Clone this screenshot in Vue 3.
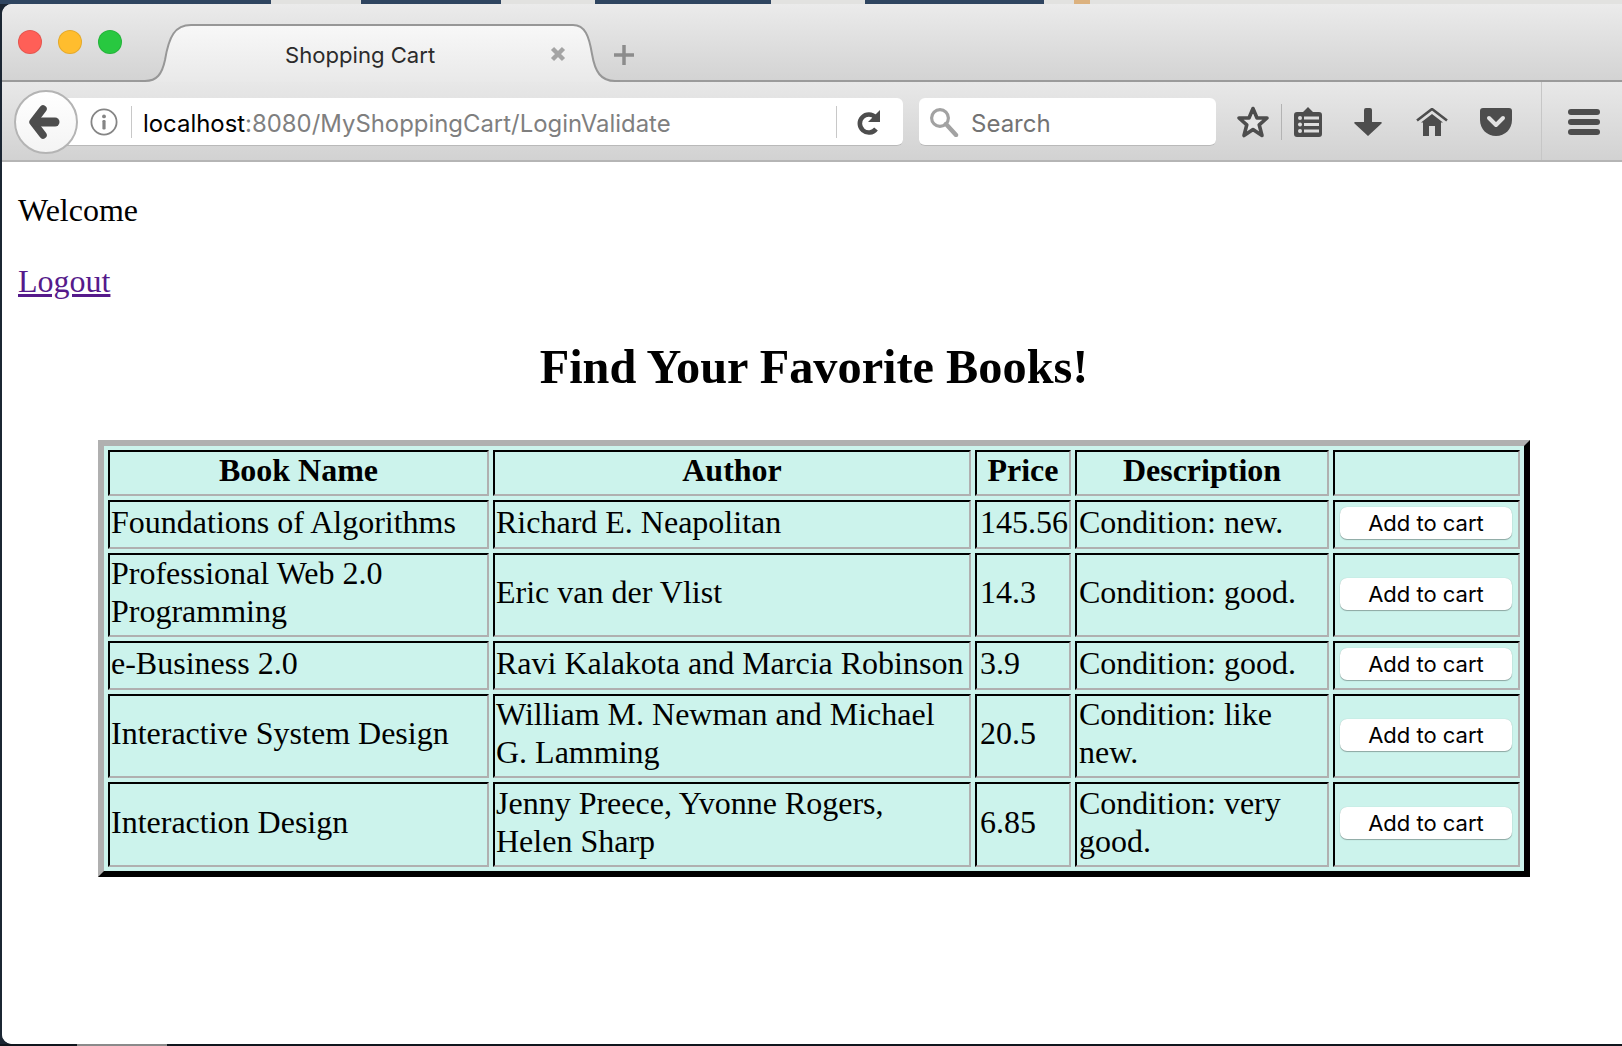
<script setup>
const headers = ['Book Name', 'Author', 'Price', 'Description', '']
const books = [
  { name: 'Foundations of Algorithms', author: 'Richard E. Neapolitan', price: '145.56', cond: 'Condition: new.' },
  { name: 'Professional Web 2.0 Programming', author: 'Eric van der Vlist', price: '14.3', cond: 'Condition: good.' },
  { name: 'e-Business 2.0', author: 'Ravi Kalakota and Marcia Robinson', price: '3.9', cond: 'Condition: good.' },
  { name: 'Interactive System Design', author: 'William M. Newman and Michael G. Lamming', price: '20.5', cond: 'Condition: like new.' },
  { name: 'Interaction Design', author: 'Jenny Preece, Yvonne Rogers, Helen Sharp', price: '6.85', cond: 'Condition: very good.' },
]
</script>

<template>
  <div class="screen">
    <div class="strip-top">
      <i class="d w271"></i><i class="l w90"></i><i class="d w140"></i><i class="l w94"></i><i class="d w176"></i><i class="l w94"></i><i class="d w179"></i><i class="l w30"></i><i class="tan"></i><i class="l grow"></i>
    </div>
    <div class="window">
      <div class="tabbar">
        <div class="lights">
          <span class="light red"></span><span class="light yellow"></span><span class="light green"></span>
        </div>
        <div class="tab">
          <svg class="tab-shape" width="480" height="58" viewBox="0 0 480 58">
            <defs>
              <linearGradient id="tabfill" x1="0" y1="0" x2="0" y2="1">
                <stop offset="0" stop-color="#f8f8f8" />
                <stop offset="1" stop-color="#e9e9e9" />
              </linearGradient>
            </defs>
            <path d="M0 58V57H5C17 57 22 50 25 36C29 12 35 1 51 1H433C445 1 449 12 452 30C455 48 461 57 475 57H480V58Z" fill="url(#tabfill)" />
            <path d="M0 57H5C17 57 22 50 25 36C29 12 35 1 51 1H433C445 1 449 12 452 30C455 48 461 57 475 57H480" fill="none" stroke="#979797" stroke-width="2" />
          </svg>
          <span class="tab-title">Shopping Cart</span>
          <svg class="tab-close" width="16" height="16" viewBox="0 0 16 16"><path d="M2.5 2.5L13.5 13.5M13.5 2.5L2.5 13.5" stroke="#a4a4a4" stroke-width="4.4" /></svg>
        </div>
        <svg class="new-tab" width="22" height="22" viewBox="0 0 22 22"><path d="M11 1V21M1 11H21" stroke="#8c8c8c" stroke-width="3.5" /></svg>
      </div>

      <div class="toolbar">
        <div class="back">
          <svg width="32" height="34" viewBox="0 0 32 34"><path d="M15 4L5 17L15 30" fill="none" stroke="#4d4d4d" stroke-width="7.5" stroke-linejoin="round" stroke-linecap="round" /><path d="M7 17H27" stroke="#4d4d4d" stroke-width="9" stroke-linecap="round" /></svg>
        </div>
        <div class="urlbar">
          <svg class="info" width="28" height="28" viewBox="0 0 28 28"><circle cx="14" cy="14" r="12.6" fill="none" stroke="#858585" stroke-width="1.8" /><circle cx="14" cy="8.4" r="1.9" fill="#858585" /><rect x="12.4" y="12" width="3.2" height="9.5" rx="1.2" fill="#858585" /></svg>
          <span class="vsep first"></span>
          <div class="url"><span class="host">localhost</span>:8080/MyShoppingCart/LoginValidate</div>
          <span class="vsep"></span>
          <svg class="reload" width="26" height="28" viewBox="0 0 26 28"><path d="M19.5 9.5A9 9 0 1 0 20 21" fill="none" stroke="#4d4d4d" stroke-width="4.6" /><path d="M24 2V14H12Z" fill="#4d4d4d" /></svg>
        </div>
        <div class="search">
          <svg class="glass" width="30" height="30" viewBox="0 0 30 30"><circle cx="11" cy="11" r="8.4" fill="none" stroke="#a2a2a2" stroke-width="3.2" /><path d="M17 17L27 28" stroke="#a2a2a2" stroke-width="4.4" stroke-linecap="round" /></svg>
          <span class="search-label">Search</span>
        </div>
        <div class="tools">
          <svg class="star" width="34" height="34" viewBox="0 0 34 34"><path d="M17 3.5L21 13H31L23.2 19.8L26 30.5L17 24.5L8 30.5L10.8 19.8L3 13H13Z" fill="#e4e4e4" stroke="#4d4d4d" stroke-width="3.6" stroke-linejoin="round" /></svg>
          <span class="tool-sep"></span>
          <svg class="clip" width="28" height="30" viewBox="0 0 28 30"><path d="M3 5H9L14 0L19 5H25A3 3 0 0 1 28 8V27A3 3 0 0 1 25 30H3A3 3 0 0 1 0 27V8A3 3 0 0 1 3 5Z" fill="#4d4d4d" /><g fill="#dedede"><circle cx="6" cy="11" r="2" /><circle cx="6" cy="17.5" r="2" /><circle cx="6" cy="24" r="2" /><rect x="10" y="9.5" width="15" height="3" /><rect x="10" y="16" width="15" height="3" /><rect x="10" y="22.5" width="15" height="3" /></g></svg>
          <svg class="down" width="28" height="28" viewBox="0 0 28 28"><path d="M10 2A2 2 0 0 1 12 0H16A2 2 0 0 1 18 2V14H27A1 1 0 0 1 27.5 15.5L14 28L.5 15.5A1 1 0 0 1 1 14H10Z" fill="#4d4d4d" /></svg>
          <svg class="home" width="32" height="28" viewBox="0 0 32 28"><path d="M1 12.5L16 1L31 12.5" fill="none" stroke="#4d4d4d" stroke-width="2.6" /><path d="M16 6L27 14.5H25V28H19V18H13V28H7V14.5H5Z" fill="#4d4d4d" /></svg>
          <svg class="pocket" width="32" height="28" viewBox="0 0 32 28"><path d="M3 0H29A3 3 0 0 1 32 3V12C32 21 25 28 16 28C7 28 0 21 0 12V3A3 3 0 0 1 3 0Z" fill="#4d4d4d" /><path d="M9 10L16 17L23 10" fill="none" stroke="#e2e2e2" stroke-width="4" stroke-linecap="round" stroke-linejoin="round" /></svg>
          <span class="tool-sep tall"></span>
          <div class="burger"><i></i><i></i><i></i></div>
        </div>
      </div>

      <div class="page">
        <p class="text">Welcome</p>
        <p class="text"><a class="logout" href="#">Logout</a></p>
        <h1 class="title">Find Your Favorite Books!</h1>
        <table class="books">
          <colgroup>
            <col class="c1" /><col class="c2" /><col class="c3" /><col class="c4" /><col class="c5" />
          </colgroup>
          <thead>
            <tr>
              <th v-for="(h, i) in headers" :key="i"><span class="cell-text">{{ h }}</span></th>
            </tr>
          </thead>
          <tbody>
            <tr v-for="b in books" :key="b.name">
              <td class="tight"><span class="cell-text">{{ b.name }}</span></td>
              <td class="tight"><span class="cell-text">{{ b.author }}</span></td>
              <td class="wide"><span class="cell-text">{{ b.price }}</span></td>
              <td><span class="cell-text">{{ b.cond }}</span></td>
              <td class="action"><button class="add" type="button">Add to cart</button></td>
            </tr>
          </tbody>
        </table>
      </div>
    </div>
    <div class="strip-bottom"><i class="g"></i></div>
  </div>
</template>

<style>
html, body { margin: 0; padding: 0; background: #141c26; overflow: hidden; }
</style>

<style scoped>
.screen {
  width: 1622px;
  height: 1046px;
  display: flex;
  flex-direction: column;
  background: #1b2633;
  overflow: hidden;
}
.strip-top { height: 4px; display: flex; flex: none; }
.strip-top i { display: block; height: 4px; }
.d { background: #2f4560; }
.l { background: #e2e2e0; }
.tan { width: 16px; background: #dcb27f; }
.w271 { width: 271px; }
.w90 { width: 90px; }
.w140 { width: 140px; }
.w94 { width: 94px; }
.w176 { width: 176px; }
.w179 { width: 179px; }
.w30 { width: 30px; }
.grow { flex: 1; }
.strip-bottom { height: 2px; flex: none; padding-left: 77px; background: #10161d; }
.strip-bottom .g { display: block; width: 90px; height: 2px; background: #8a8a8a; }
.window {
  flex: 1;
  min-height: 0;
  margin-left: 2px;
  display: flex;
  flex-direction: column;
  border-radius: 10px 0 0 10px;
  overflow: hidden;
  background: #fff;
}
.tabbar {
  height: 78px;
  flex: none;
  box-sizing: border-box;
  display: flex;
  align-items: flex-end;
  background: linear-gradient(#ebebeb, #d3d3d3);
  border-bottom: 2px solid #9b9b9b;
}
.lights {
  width: 138px;
  height: 76px;
  flex: none;
  box-sizing: border-box;
  padding: 26px 0 0 16px;
  display: flex;
  gap: 16px;
}
.light { width: 24px; height: 24px; border-radius: 50%; box-sizing: border-box; border: 1px solid rgba(0, 0, 0, .1); }
.red { background: #ff5f57; }
.yellow { background: #ffbd2e; }
.green { background: #28c840; }
.tab {
  position: relative;
  width: 478px;
  height: 56px;
  flex: none;
  display: flex;
  align-items: center;
}
.tab-shape { position: absolute; left: 0; top: 0; }
.tab-title {
  position: relative;
  margin: 6px 0 0 145px;
  font: 22.1px/30px Inter, "Liberation Sans", sans-serif;
  color: #2b2b2b;
  white-space: nowrap;
}
.tab-close { position: absolute; left: 410px; top: 22px; }
.new-tab { margin: 0 0 14px -5px; flex: none; }
.toolbar {
  height: 80px;
  flex: none;
  box-sizing: border-box;
  display: flex;
  align-items: center;
  background: linear-gradient(#e8e8e8, #d2d2d2);
  border-bottom: 2px solid #b5b5b5;
}
.back {
  width: 64px;
  height: 64px;
  flex: none;
  box-sizing: border-box;
  margin: 2px 0 0 12px;
  border: 2px solid #b4b4b4;
  border-radius: 50%;
  background: linear-gradient(#fff, #f4f4f4);
  display: flex;
  align-items: center;
  justify-content: center;
  position: relative;
  z-index: 1;
}
.back svg { margin-left: -4px; }
.urlbar {
  width: 843px;
  height: 48px;
  flex: none;
  margin: 2px 0 0 -18px;
  box-sizing: border-box;
  padding: 0 21px 0 30px;
  display: flex;
  align-items: center;
  background: #fff;
  border-radius: 0 6px 6px 0;
  border-bottom: 1px solid #b9b9b9;
}
.info { flex: none; }
.vsep { width: 1px; height: 32px; background: #c8c8c8; flex: none; }
.vsep.first { margin-left: 13px; }
.url {
  flex: 1;
  margin-left: 11px;
  padding-top: 4px;
  font: 23.9px/32px Inter, "Liberation Sans", sans-serif;
  color: #7f7f7f;
  white-space: nowrap;
}
.host { color: #000; }
.reload { margin-left: 19px; flex: none; }
.search {
  width: 297px;
  height: 48px;
  flex: none;
  margin: 2px 0 0 16px;
  box-sizing: border-box;
  padding-left: 10px;
  display: flex;
  align-items: center;
  gap: 12px;
  background: #fff;
  border-radius: 6px;
  border-bottom: 1px solid #b9b9b9;
  font: 24px/32px Inter, "Liberation Sans", sans-serif;
  color: #737373;
}
.search-label { padding-top: 4px; }
.tools { display: flex; align-items: center; height: 78px; flex: none; margin-left: 20px; }
.tools svg, .burger, .tool-sep { margin-top: 2px; }
.star { flex: none; }
.tool-sep { width: 1px; height: 36px; background: #b3b3b3; margin-left: 11px; flex: none; }
.clip { margin-left: 12px; flex: none; }
.down { margin-left: 32px; flex: none; }
.home { margin-left: 34px; flex: none; }
.pocket { margin-left: 32px; flex: none; }
.tool-sep.tall { height: 78px; margin-top: 0; background: #c6c6c6; margin-left: 29px; }
.burger { margin-left: 26px; display: flex; flex-direction: column; gap: 4px; }
.burger i { display: block; width: 32px; height: 6px; border-radius: 3px; background: #4d4d4d; }
.page {
  flex: 1;
  min-height: 0;
  padding: 29px 0 0 16px;
  font-family: "Liberation Serif", "Times New Roman", serif;
  color: #000;
  background: #fff;
}
.text { margin: 0 0 33px; font-size: 32px; line-height: 38px; }
.logout { color: #551a8b; text-decoration: underline; }
.title {
  margin: 39px 0 45px -12px;
  font-size: 48.3px;
  line-height: 56px;
  font-weight: bold;
  text-align: center;
}
.books {
  width: 1432px;
  margin-left: 80px;
  table-layout: fixed;
  border-collapse: separate;
  border-spacing: 4px;
  border-width: 6px;
  border-style: solid;
  border-color: #b0b0b0 #000 #000 #b0b0b0;
  background: #ccf3ec;
  font-size: 32px;
  line-height: 38px;
}
.c1 { width: 381px; }
.c2 { width: 478px; }
.c3 { width: 96px; }
.c4 { width: 254px; }
.c5 { width: 187px; }
.books th, .books td {
  padding: 0 2px 4px;
  border-width: 2px;
  border-style: solid;
  border-color: #000 #b0b0b0 #b0b0b0 #000;
  vertical-align: middle;
}
.books th { font-weight: bold; text-align: center; }
.books td { text-align: left; }
.books td.tight { padding-left: 1px; }
.books td.wide { padding-left: 3px; }
.books td.action { padding: 2px; }
.books tr:last-child td:not(.action) { padding-top: 1px; }
.cell-text { display: block; margin: -1px 0 1px; }
.add {
  display: block;
  width: 172px;
  height: 32px;
  margin: 3px 0 6px 3px;
  padding: 0;
  border: 0;
  border-radius: 7px;
  background: #fff;
  box-shadow: 0 1px 1px rgba(0, 0, 0, .3), 0 0 1px rgba(0, 0, 0, .2);
  font: 22px/32px Inter, "Liberation Sans", sans-serif;
  color: #000;
}
</style>
